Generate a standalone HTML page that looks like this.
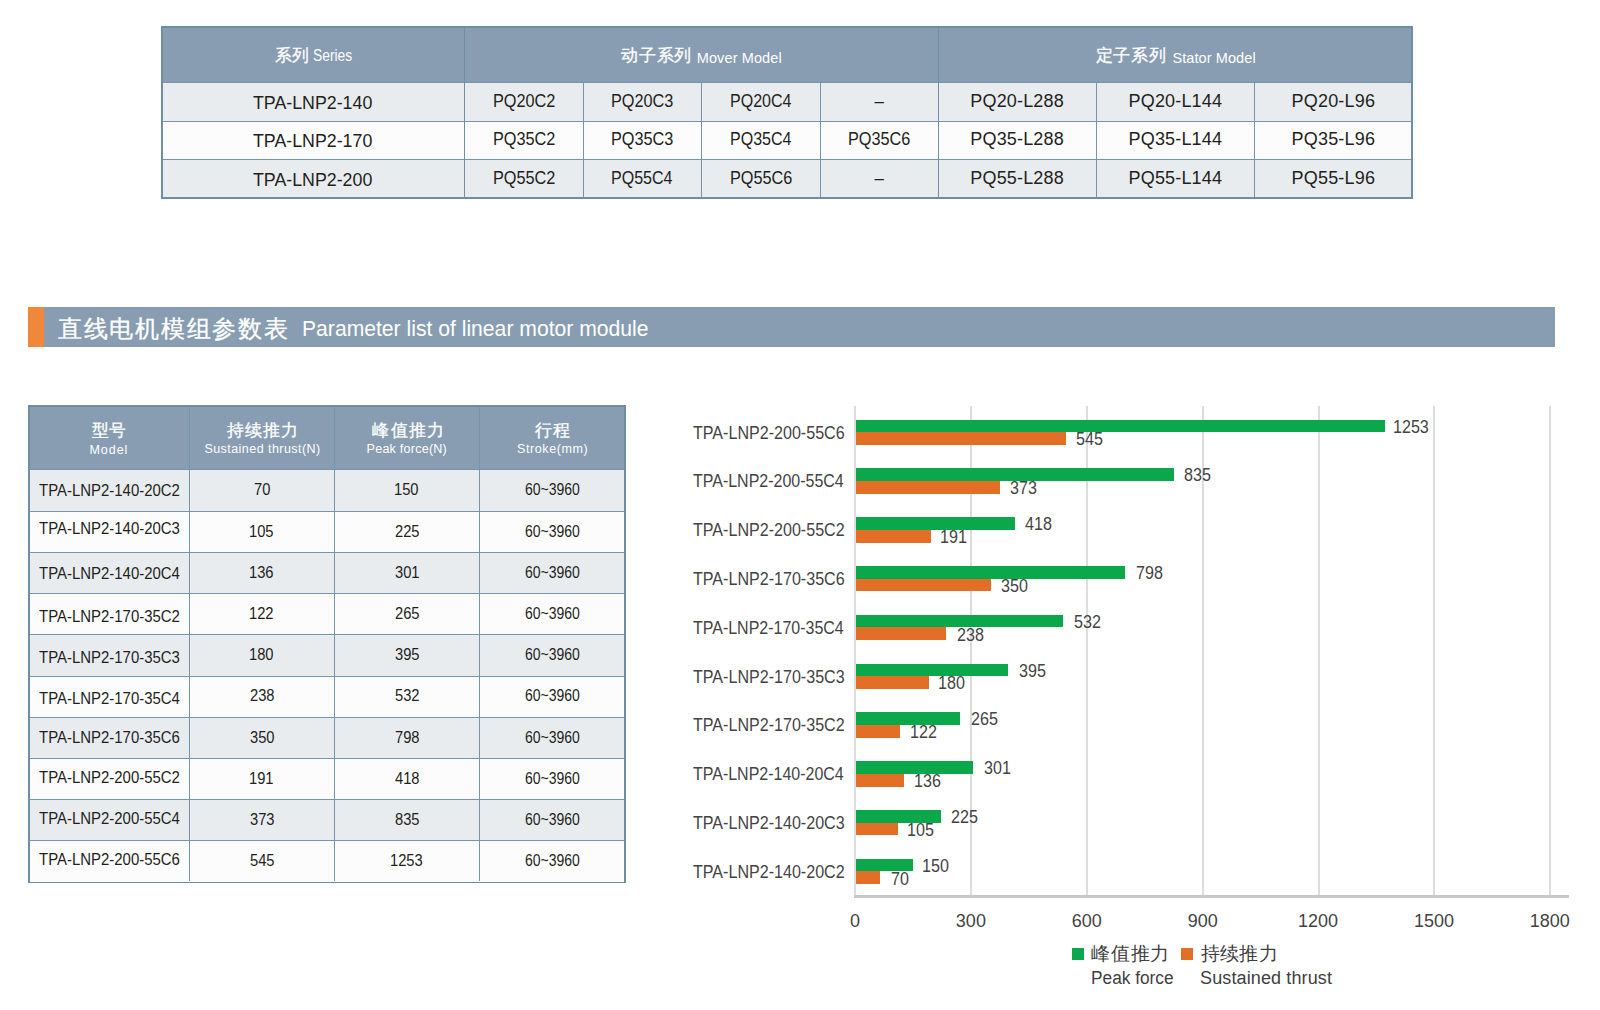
<!DOCTYPE html>
<html><head><meta charset="utf-8"><title>Linear motor module parameters</title>
<style>
html,body{margin:0;padding:0;background:#ffffff;width:1600px;height:1010px;overflow:hidden;position:relative;font-family:"Liberation Sans", sans-serif;}
.r{position:absolute;}
.t{position:absolute;white-space:nowrap;line-height:0;transform-origin:0 0;}
</style></head><body>
<div class="r" style="left:161px;top:26.00px;width:1252.00px;height:173.00px;background:#6d8fa6"></div>
<div class="r" style="left:163px;top:28.00px;width:1248.00px;height:55.00px;background:#889db2"></div>
<div class="r" style="left:163px;top:83.00px;width:1248.00px;height:38.00px;background:#e9ecef"></div>
<div class="r" style="left:163px;top:122.00px;width:1248.00px;height:37.00px;background:#fcfcfc"></div>
<div class="r" style="left:163px;top:160.00px;width:1248.00px;height:37.00px;background:#e9ecef"></div>
<div class="r" style="left:163px;top:82.00px;width:1248.00px;height:1.00px;background:#7495ab"></div>
<div class="r" style="left:163px;top:121.00px;width:1248.00px;height:1.00px;background:#7495ab"></div>
<div class="r" style="left:163px;top:159.00px;width:1248.00px;height:1.00px;background:#7495ab"></div>
<div class="r" style="left:464px;top:28.00px;width:1.00px;height:169.00px;background:#6f8fa6"></div>
<div class="r" style="left:938px;top:28.00px;width:1.00px;height:169.00px;background:#6f8fa6"></div>
<div class="r" style="left:583px;top:83.00px;width:1.00px;height:114.00px;background:#7495ab"></div>
<div class="r" style="left:701px;top:83.00px;width:1.00px;height:114.00px;background:#7495ab"></div>
<div class="r" style="left:820px;top:83.00px;width:1.00px;height:114.00px;background:#7495ab"></div>
<div class="r" style="left:1096px;top:83.00px;width:1.00px;height:114.00px;background:#7495ab"></div>
<div class="r" style="left:1254px;top:83.00px;width:1.00px;height:114.00px;background:#7495ab"></div>
<div class="r" style="left:28px;top:307.00px;width:16.00px;height:40.00px;background:#f0883b"></div>
<div class="r" style="left:44px;top:307.00px;width:1511.00px;height:40.00px;background:#889db1"></div>
<div class="r" style="left:28px;top:405.00px;width:598.00px;height:478.00px;background:#6d8fa6"></div>
<div class="r" style="left:30px;top:407.00px;width:594.00px;height:62.50px;background:#889db2"></div>
<div class="r" style="left:30px;top:469.00px;width:594.00px;height:42.00px;background:#e9ecef"></div>
<div class="r" style="left:30px;top:511.00px;width:594.00px;height:41.00px;background:#fcfcfc"></div>
<div class="r" style="left:30px;top:511.00px;width:594.00px;height:1.00px;background:#7495ab"></div>
<div class="r" style="left:30px;top:552.00px;width:594.00px;height:41.00px;background:#e9ecef"></div>
<div class="r" style="left:30px;top:552.00px;width:594.00px;height:1.00px;background:#7495ab"></div>
<div class="r" style="left:30px;top:593.00px;width:594.00px;height:41.00px;background:#fcfcfc"></div>
<div class="r" style="left:30px;top:593.00px;width:594.00px;height:1.00px;background:#7495ab"></div>
<div class="r" style="left:30px;top:634.00px;width:594.00px;height:42.00px;background:#e9ecef"></div>
<div class="r" style="left:30px;top:634.00px;width:594.00px;height:1.00px;background:#7495ab"></div>
<div class="r" style="left:30px;top:676.00px;width:594.00px;height:41.00px;background:#fcfcfc"></div>
<div class="r" style="left:30px;top:676.00px;width:594.00px;height:1.00px;background:#7495ab"></div>
<div class="r" style="left:30px;top:717.00px;width:594.00px;height:41.00px;background:#e9ecef"></div>
<div class="r" style="left:30px;top:717.00px;width:594.00px;height:1.00px;background:#7495ab"></div>
<div class="r" style="left:30px;top:758.00px;width:594.00px;height:41.00px;background:#fcfcfc"></div>
<div class="r" style="left:30px;top:758.00px;width:594.00px;height:1.00px;background:#7495ab"></div>
<div class="r" style="left:30px;top:799.00px;width:594.00px;height:41.00px;background:#e9ecef"></div>
<div class="r" style="left:30px;top:799.00px;width:594.00px;height:1.00px;background:#7495ab"></div>
<div class="r" style="left:30px;top:840.00px;width:594.00px;height:42.00px;background:#fcfcfc"></div>
<div class="r" style="left:30px;top:840.00px;width:594.00px;height:1.00px;background:#7495ab"></div>
<div class="r" style="left:30px;top:469.00px;width:594.00px;height:1.00px;background:#7495ab"></div>
<div class="r" style="left:189px;top:407.00px;width:1.00px;height:474.00px;background:#7495ab"></div>
<div class="r" style="left:334px;top:407.00px;width:1.00px;height:474.00px;background:#7495ab"></div>
<div class="r" style="left:479px;top:407.00px;width:1.00px;height:474.00px;background:#7495ab"></div>
<div class="r" style="left:969.88px;top:406.00px;width:2.00px;height:489.00px;background:#dcdcdc"></div>
<div class="r" style="left:1085.76px;top:406.00px;width:2.00px;height:489.00px;background:#dcdcdc"></div>
<div class="r" style="left:1201.6399999999999px;top:406.00px;width:2.00px;height:489.00px;background:#dcdcdc"></div>
<div class="r" style="left:1317.52px;top:406.00px;width:2.00px;height:489.00px;background:#dcdcdc"></div>
<div class="r" style="left:1433.4px;top:406.00px;width:2.00px;height:489.00px;background:#dcdcdc"></div>
<div class="r" style="left:1549.28px;top:406.00px;width:2.00px;height:489.00px;background:#dcdcdc"></div>
<div class="r" style="left:854px;top:405.50px;width:2.00px;height:490.50px;background:#dcdcdc"></div>
<div class="r" style="left:854px;top:895.00px;width:715.00px;height:2.50px;background:#c9c9c9"></div>
<div class="r" style="left:856px;top:419.50px;width:528.70px;height:12.75px;background:#0aa84a"></div>
<div class="r" style="left:856px;top:432.25px;width:210.25px;height:12.75px;background:#e36e25"></div>
<div class="r" style="left:856px;top:468.30px;width:318.00px;height:12.75px;background:#0aa84a"></div>
<div class="r" style="left:856px;top:481.05px;width:143.50px;height:12.75px;background:#e36e25"></div>
<div class="r" style="left:856px;top:517.10px;width:158.50px;height:12.75px;background:#0aa84a"></div>
<div class="r" style="left:856px;top:529.85px;width:74.50px;height:12.75px;background:#e36e25"></div>
<div class="r" style="left:856px;top:565.90px;width:269.00px;height:12.75px;background:#0aa84a"></div>
<div class="r" style="left:856px;top:578.65px;width:134.75px;height:12.75px;background:#e36e25"></div>
<div class="r" style="left:856px;top:614.70px;width:207.00px;height:12.75px;background:#0aa84a"></div>
<div class="r" style="left:856px;top:627.45px;width:90.00px;height:12.75px;background:#e36e25"></div>
<div class="r" style="left:856px;top:663.50px;width:152.00px;height:12.75px;background:#0aa84a"></div>
<div class="r" style="left:856px;top:676.25px;width:72.75px;height:12.75px;background:#e36e25"></div>
<div class="r" style="left:856px;top:712.30px;width:104.00px;height:12.75px;background:#0aa84a"></div>
<div class="r" style="left:856px;top:725.05px;width:44.00px;height:12.75px;background:#e36e25"></div>
<div class="r" style="left:856px;top:761.10px;width:117.00px;height:12.75px;background:#0aa84a"></div>
<div class="r" style="left:856px;top:773.85px;width:48.25px;height:12.75px;background:#e36e25"></div>
<div class="r" style="left:856px;top:809.90px;width:84.50px;height:12.75px;background:#0aa84a"></div>
<div class="r" style="left:856px;top:822.65px;width:41.50px;height:12.75px;background:#e36e25"></div>
<div class="r" style="left:856px;top:858.70px;width:57.00px;height:12.75px;background:#0aa84a"></div>
<div class="r" style="left:856px;top:871.45px;width:24.00px;height:12.75px;background:#e36e25"></div>
<div class="r" style="left:1071.5px;top:948.00px;width:12.40px;height:12.00px;background:#0aa84a"></div>
<div class="r" style="left:1180.5px;top:948.00px;width:12.50px;height:12.00px;background:#e36e25"></div>
<div class="t" style="left:274.80px;top:56.00px;font-size:17px;color:#ffffff;transform:scaleX(0.9879);-webkit-text-stroke:0.3px #ffffff;">系列</div>
<div class="t" style="left:312.90px;top:56.20px;font-size:16px;color:#ffffff;transform:scaleX(0.8644);">Series</div>
<div class="t" style="left:621.20px;top:56.00px;font-size:17px;color:#ffffff;letter-spacing:0.733px;-webkit-text-stroke:0.3px #ffffff;">动子系列</div>
<div class="t" style="left:696.70px;top:57.50px;font-size:14.5px;color:#ffffff;letter-spacing:0.121px;">Mover Model</div>
<div class="t" style="left:1095.70px;top:56.00px;font-size:17px;color:#ffffff;letter-spacing:0.733px;-webkit-text-stroke:0.3px #ffffff;">定子系列</div>
<div class="t" style="left:1172.50px;top:57.50px;font-size:14.5px;color:#ffffff;letter-spacing:0.083px;">Stator Model</div>
<div class="t" style="left:253.35px;top:102.70px;font-size:18px;color:#231f20;transform:scaleX(0.9883);">TPA-LNP2-140</div>
<div class="t" style="left:492.67px;top:100.75px;font-size:17.5px;color:#231f20;transform:scaleX(0.9298);">PQ20C2</div>
<div class="t" style="left:611.42px;top:100.75px;font-size:17.5px;color:#231f20;transform:scaleX(0.9298);">PQ20C3</div>
<div class="t" style="left:729.93px;top:100.75px;font-size:17.5px;color:#231f20;transform:scaleX(0.9158);">PQ20C4</div>
<div class="t" style="left:874.50px;top:101.75px;font-size:17px;color:#231f20;">–</div>
<div class="t" style="left:970.30px;top:100.75px;font-size:18px;color:#231f20;letter-spacing:0.168px;">PQ20-L288</div>
<div class="t" style="left:1128.55px;top:100.75px;font-size:18px;color:#231f20;letter-spacing:0.168px;">PQ20-L144</div>
<div class="t" style="left:1291.55px;top:100.75px;font-size:18px;color:#231f20;letter-spacing:0.194px;">PQ20-L96</div>
<div class="t" style="left:253.35px;top:141.10px;font-size:18px;color:#231f20;transform:scaleX(0.9883);">TPA-LNP2-170</div>
<div class="t" style="left:492.67px;top:139.40px;font-size:17.5px;color:#231f20;transform:scaleX(0.9298);">PQ35C2</div>
<div class="t" style="left:611.42px;top:139.40px;font-size:17.5px;color:#231f20;transform:scaleX(0.9298);">PQ35C3</div>
<div class="t" style="left:729.93px;top:139.40px;font-size:17.5px;color:#231f20;transform:scaleX(0.9158);">PQ35C4</div>
<div class="t" style="left:848.17px;top:139.40px;font-size:17.5px;color:#231f20;transform:scaleX(0.9298);">PQ35C6</div>
<div class="t" style="left:970.30px;top:139.40px;font-size:18px;color:#231f20;letter-spacing:0.168px;">PQ35-L288</div>
<div class="t" style="left:1128.55px;top:139.40px;font-size:18px;color:#231f20;letter-spacing:0.168px;">PQ35-L144</div>
<div class="t" style="left:1291.55px;top:139.40px;font-size:18px;color:#231f20;letter-spacing:0.194px;">PQ35-L96</div>
<div class="t" style="left:253.35px;top:179.80px;font-size:18px;color:#231f20;transform:scaleX(0.9883);">TPA-LNP2-200</div>
<div class="t" style="left:492.67px;top:178.00px;font-size:17.5px;color:#231f20;transform:scaleX(0.9298);">PQ55C2</div>
<div class="t" style="left:611.43px;top:178.00px;font-size:17.5px;color:#231f20;transform:scaleX(0.9158);">PQ55C4</div>
<div class="t" style="left:729.92px;top:178.00px;font-size:17.5px;color:#231f20;transform:scaleX(0.9298);">PQ55C6</div>
<div class="t" style="left:874.50px;top:179.00px;font-size:17px;color:#231f20;">–</div>
<div class="t" style="left:970.30px;top:178.00px;font-size:18px;color:#231f20;letter-spacing:0.168px;">PQ55-L288</div>
<div class="t" style="left:1128.55px;top:178.00px;font-size:18px;color:#231f20;letter-spacing:0.168px;">PQ55-L144</div>
<div class="t" style="left:1291.55px;top:178.00px;font-size:18px;color:#231f20;letter-spacing:0.194px;">PQ55-L96</div>
<div class="t" style="left:58.10px;top:328.50px;font-size:24px;color:#ffffff;letter-spacing:1.700px;-webkit-text-stroke:0.3px #ffffff;">直线电机模组参数表</div>
<div class="t" style="left:301.74px;top:329.10px;font-size:22px;color:#ffffff;transform:scaleX(0.9606);">Parameter list of linear motor module</div>
<div class="t" style="left:91.60px;top:431.00px;font-size:17px;color:#ffffff;transform:scaleX(0.9824);-webkit-text-stroke:0.3px #ffffff;">型号</div>
<div class="t" style="left:89.40px;top:449.50px;font-size:12.5px;color:#ffffff;letter-spacing:0.983px;">Model</div>
<div class="t" style="left:227.40px;top:430.70px;font-size:17px;color:#ffffff;letter-spacing:1.033px;-webkit-text-stroke:0.3px #ffffff;">持续推力</div>
<div class="t" style="left:204.40px;top:448.90px;font-size:12.5px;color:#ffffff;letter-spacing:0.454px;">Sustained thrust(N)</div>
<div class="t" style="left:372.40px;top:430.70px;font-size:17px;color:#ffffff;letter-spacing:1.200px;-webkit-text-stroke:0.3px #ffffff;">峰值推力</div>
<div class="t" style="left:366.60px;top:448.90px;font-size:12.5px;color:#ffffff;letter-spacing:0.255px;">Peak force(N)</div>
<div class="t" style="left:535.40px;top:431.00px;font-size:17px;color:#ffffff;letter-spacing:0.200px;-webkit-text-stroke:0.3px #ffffff;">行程</div>
<div class="t" style="left:517.00px;top:448.90px;font-size:12.5px;color:#ffffff;letter-spacing:0.609px;">Stroke(mm)</div>
<div class="t" style="left:39.00px;top:490.50px;font-size:16px;color:#231f20;transform:scaleX(0.9339);">TPA-LNP2-140-20C2</div>
<div class="t" style="left:253.77px;top:490.40px;font-size:16px;color:#231f20;transform:scaleX(0.9200);">70</div>
<div class="t" style="left:394.21px;top:490.40px;font-size:16px;color:#231f20;transform:scaleX(0.9200);">150</div>
<div class="t" style="left:525.00px;top:490.40px;font-size:16px;color:#231f20;transform:scaleX(0.8753);">60~3960</div>
<div class="t" style="left:39.00px;top:529.40px;font-size:16px;color:#231f20;transform:scaleX(0.9339);">TPA-LNP2-140-20C3</div>
<div class="t" style="left:249.21px;top:531.60px;font-size:16px;color:#231f20;transform:scaleX(0.9200);">105</div>
<div class="t" style="left:394.67px;top:531.60px;font-size:16px;color:#231f20;transform:scaleX(0.9200);">225</div>
<div class="t" style="left:525.00px;top:531.60px;font-size:16px;color:#231f20;transform:scaleX(0.8753);">60~3960</div>
<div class="t" style="left:39.00px;top:574.10px;font-size:16px;color:#231f20;transform:scaleX(0.9339);">TPA-LNP2-140-20C4</div>
<div class="t" style="left:249.21px;top:572.80px;font-size:16px;color:#231f20;transform:scaleX(0.9200);">136</div>
<div class="t" style="left:394.67px;top:572.80px;font-size:16px;color:#231f20;transform:scaleX(0.9200);">301</div>
<div class="t" style="left:525.00px;top:572.80px;font-size:16px;color:#231f20;transform:scaleX(0.8753);">60~3960</div>
<div class="t" style="left:39.00px;top:616.90px;font-size:16px;color:#231f20;transform:scaleX(0.9339);">TPA-LNP2-170-35C2</div>
<div class="t" style="left:249.21px;top:614.00px;font-size:16px;color:#231f20;transform:scaleX(0.9200);">122</div>
<div class="t" style="left:394.67px;top:614.00px;font-size:16px;color:#231f20;transform:scaleX(0.9200);">265</div>
<div class="t" style="left:525.00px;top:614.00px;font-size:16px;color:#231f20;transform:scaleX(0.8753);">60~3960</div>
<div class="t" style="left:39.00px;top:657.80px;font-size:16px;color:#231f20;transform:scaleX(0.9339);">TPA-LNP2-170-35C3</div>
<div class="t" style="left:249.21px;top:655.20px;font-size:16px;color:#231f20;transform:scaleX(0.9200);">180</div>
<div class="t" style="left:394.67px;top:655.20px;font-size:16px;color:#231f20;transform:scaleX(0.9200);">395</div>
<div class="t" style="left:525.00px;top:655.20px;font-size:16px;color:#231f20;transform:scaleX(0.8753);">60~3960</div>
<div class="t" style="left:39.00px;top:698.50px;font-size:16px;color:#231f20;transform:scaleX(0.9339);">TPA-LNP2-170-35C4</div>
<div class="t" style="left:249.67px;top:696.40px;font-size:16px;color:#231f20;transform:scaleX(0.9200);">238</div>
<div class="t" style="left:394.67px;top:696.40px;font-size:16px;color:#231f20;transform:scaleX(0.9200);">532</div>
<div class="t" style="left:525.00px;top:696.40px;font-size:16px;color:#231f20;transform:scaleX(0.8753);">60~3960</div>
<div class="t" style="left:39.00px;top:738.30px;font-size:16px;color:#231f20;transform:scaleX(0.9339);">TPA-LNP2-170-35C6</div>
<div class="t" style="left:249.67px;top:737.60px;font-size:16px;color:#231f20;transform:scaleX(0.9200);">350</div>
<div class="t" style="left:394.67px;top:737.60px;font-size:16px;color:#231f20;transform:scaleX(0.9200);">798</div>
<div class="t" style="left:525.00px;top:737.60px;font-size:16px;color:#231f20;transform:scaleX(0.8753);">60~3960</div>
<div class="t" style="left:39.00px;top:778.30px;font-size:16px;color:#231f20;transform:scaleX(0.9339);">TPA-LNP2-200-55C2</div>
<div class="t" style="left:249.21px;top:778.80px;font-size:16px;color:#231f20;transform:scaleX(0.9200);">191</div>
<div class="t" style="left:394.67px;top:778.80px;font-size:16px;color:#231f20;transform:scaleX(0.9200);">418</div>
<div class="t" style="left:525.00px;top:778.80px;font-size:16px;color:#231f20;transform:scaleX(0.8753);">60~3960</div>
<div class="t" style="left:39.00px;top:819.20px;font-size:16px;color:#231f20;transform:scaleX(0.9339);">TPA-LNP2-200-55C4</div>
<div class="t" style="left:249.67px;top:820.00px;font-size:16px;color:#231f20;transform:scaleX(0.9200);">373</div>
<div class="t" style="left:394.67px;top:820.00px;font-size:16px;color:#231f20;transform:scaleX(0.9200);">835</div>
<div class="t" style="left:525.00px;top:820.00px;font-size:16px;color:#231f20;transform:scaleX(0.8753);">60~3960</div>
<div class="t" style="left:39.00px;top:860.20px;font-size:16px;color:#231f20;transform:scaleX(0.9339);">TPA-LNP2-200-55C6</div>
<div class="t" style="left:249.67px;top:861.20px;font-size:16px;color:#231f20;transform:scaleX(0.9200);">545</div>
<div class="t" style="left:390.12px;top:861.20px;font-size:16px;color:#231f20;transform:scaleX(0.9200);">1253</div>
<div class="t" style="left:525.00px;top:861.20px;font-size:16px;color:#231f20;transform:scaleX(0.8753);">60~3960</div>
<div class="t" style="left:692.50px;top:432.55px;font-size:17.5px;color:#444444;transform:scaleX(0.9191);">TPA-LNP2-200-55C6</div>
<div class="t" style="left:1393.08px;top:426.68px;font-size:17.5px;color:#444444;transform:scaleX(0.9200);">1253</div>
<div class="t" style="left:1076.25px;top:439.40px;font-size:17.5px;color:#444444;transform:scaleX(0.9200);">545</div>
<div class="t" style="left:692.50px;top:481.35px;font-size:17.5px;color:#444444;transform:scaleX(0.9135);">TPA-LNP2-200-55C4</div>
<div class="t" style="left:1183.75px;top:475.48px;font-size:17.5px;color:#444444;transform:scaleX(0.9200);">835</div>
<div class="t" style="left:1010.00px;top:488.20px;font-size:17.5px;color:#444444;transform:scaleX(0.9200);">373</div>
<div class="t" style="left:692.50px;top:530.15px;font-size:17.5px;color:#444444;transform:scaleX(0.9191);">TPA-LNP2-200-55C2</div>
<div class="t" style="left:1024.50px;top:524.27px;font-size:17.5px;color:#444444;transform:scaleX(0.9200);">418</div>
<div class="t" style="left:939.58px;top:537.00px;font-size:17.5px;color:#444444;transform:scaleX(0.9200);">191</div>
<div class="t" style="left:692.50px;top:578.95px;font-size:17.5px;color:#444444;transform:scaleX(0.9191);">TPA-LNP2-170-35C6</div>
<div class="t" style="left:1135.75px;top:573.07px;font-size:17.5px;color:#444444;transform:scaleX(0.9200);">798</div>
<div class="t" style="left:1001.25px;top:585.80px;font-size:17.5px;color:#444444;transform:scaleX(0.9200);">350</div>
<div class="t" style="left:692.50px;top:627.75px;font-size:17.5px;color:#444444;transform:scaleX(0.9135);">TPA-LNP2-170-35C4</div>
<div class="t" style="left:1073.75px;top:621.88px;font-size:17.5px;color:#444444;transform:scaleX(0.9200);">532</div>
<div class="t" style="left:957.00px;top:634.60px;font-size:17.5px;color:#444444;transform:scaleX(0.9200);">238</div>
<div class="t" style="left:692.50px;top:676.55px;font-size:17.5px;color:#444444;transform:scaleX(0.9191);">TPA-LNP2-170-35C3</div>
<div class="t" style="left:1018.75px;top:670.67px;font-size:17.5px;color:#444444;transform:scaleX(0.9200);">395</div>
<div class="t" style="left:937.83px;top:683.40px;font-size:17.5px;color:#444444;transform:scaleX(0.9200);">180</div>
<div class="t" style="left:692.50px;top:725.35px;font-size:17.5px;color:#444444;transform:scaleX(0.9191);">TPA-LNP2-170-35C2</div>
<div class="t" style="left:970.50px;top:719.47px;font-size:17.5px;color:#444444;transform:scaleX(0.9200);">265</div>
<div class="t" style="left:909.83px;top:732.20px;font-size:17.5px;color:#444444;transform:scaleX(0.9200);">122</div>
<div class="t" style="left:692.50px;top:774.15px;font-size:17.5px;color:#444444;transform:scaleX(0.9135);">TPA-LNP2-140-20C4</div>
<div class="t" style="left:983.75px;top:768.27px;font-size:17.5px;color:#444444;transform:scaleX(0.9200);">301</div>
<div class="t" style="left:913.58px;top:781.00px;font-size:17.5px;color:#444444;transform:scaleX(0.9200);">136</div>
<div class="t" style="left:692.50px;top:822.95px;font-size:17.5px;color:#444444;transform:scaleX(0.9191);">TPA-LNP2-140-20C3</div>
<div class="t" style="left:950.75px;top:817.07px;font-size:17.5px;color:#444444;transform:scaleX(0.9200);">225</div>
<div class="t" style="left:906.58px;top:829.80px;font-size:17.5px;color:#444444;transform:scaleX(0.9200);">105</div>
<div class="t" style="left:692.50px;top:871.75px;font-size:17.5px;color:#444444;transform:scaleX(0.9191);">TPA-LNP2-140-20C2</div>
<div class="t" style="left:921.58px;top:865.88px;font-size:17.5px;color:#444444;transform:scaleX(0.9200);">150</div>
<div class="t" style="left:891.25px;top:878.60px;font-size:17.5px;color:#444444;transform:scaleX(0.9200);">70</div>
<div class="t" style="left:850.00px;top:920.80px;font-size:18px;color:#444444;">0</div>
<div class="t" style="left:955.87px;top:920.80px;font-size:18px;color:#444444;">300</div>
<div class="t" style="left:1071.75px;top:920.80px;font-size:18px;color:#444444;">600</div>
<div class="t" style="left:1187.63px;top:920.80px;font-size:18px;color:#444444;">900</div>
<div class="t" style="left:1298.00px;top:920.80px;font-size:18px;color:#444444;">1200</div>
<div class="t" style="left:1413.88px;top:920.80px;font-size:18px;color:#444444;">1500</div>
<div class="t" style="left:1529.76px;top:920.80px;font-size:18px;color:#444444;">1800</div>
<div class="t" style="left:1091.25px;top:953.50px;font-size:19px;color:#404040;letter-spacing:0.717px;">峰值推力</div>
<div class="t" style="left:1200.60px;top:953.50px;font-size:19px;color:#404040;letter-spacing:0.433px;">持续推力</div>
<div class="t" style="left:1090.64px;top:977.75px;font-size:18px;color:#404040;transform:scaleX(0.9596);">Peak force</div>
<div class="t" style="left:1200.10px;top:977.75px;font-size:18px;color:#404040;letter-spacing:0.115px;">Sustained thrust</div>
</body></html>
